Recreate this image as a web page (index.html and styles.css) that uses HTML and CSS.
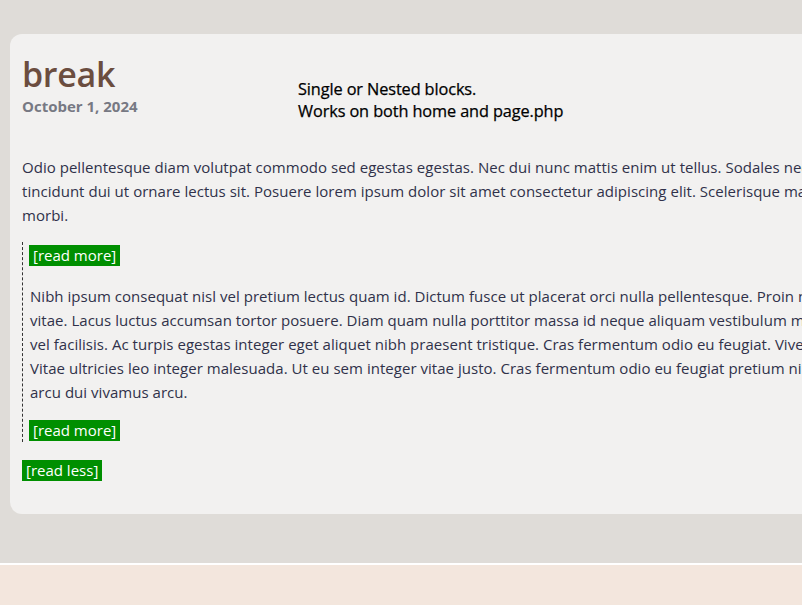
FILE: index.html
```html
<!DOCTYPE html>
<html lang="en">
<head>
<meta charset="utf-8">
<title>break</title>
<link rel="stylesheet" href="styles.css">
</head>
<body>
<main class="page">
  <article class="card">
    <header class="card-head">
      <div class="title-block">
        <h1 class="title">break</h1>
        <div class="date">October 1, 2024</div>
      </div>
      <div class="note">Single or Nested blocks.<br>Works on both home and page.php</div>
    </header>
    <p class="text">Odio pellentesque diam volutpat commodo sed egestas egestas. Nec dui nunc mattis enim ut tellus. Sodales neque sodales ut etiam sit amet nisl purus in mollis.<br>tincidunt dui ut ornare lectus sit. Posuere lorem ipsum dolor sit amet consectetur adipiscing elit. Scelerisque mauris pellentesque pulvinar pellentesque habitant<br>morbi.</p>
    <div class="nested">
      <span class="btn">[read more]</span>
      <p class="text">Nibh ipsum consequat nisl vel pretium lectus quam id. Dictum fusce ut placerat orci nulla pellentesque. Proin nibh nisl condimentum id venenatis a condimentum<br>vitae. Lacus luctus accumsan tortor posuere. Diam quam nulla porttitor massa id neque aliquam vestibulum morbi blandit cursus risus at ultrices mi tempus imperdiet nulla malesuada<br>vel facilisis. Ac turpis egestas integer eget aliquet nibh praesent tristique. Cras fermentum odio eu feugiat. Viverra accumsan in nisl nisi scelerisque eu ultrices vitae auctor eu<br>Vitae ultricies leo integer malesuada. Ut eu sem integer vitae justo. Cras fermentum odio eu feugiat pretium nibh ipsum consequat nisl vel pretium lectus quam id leo in<br>arcu dui vivamus arcu.</p>
      <span class="btn">[read more]</span>
    </div>
    <span class="btn">[read less]</span>
  </article>
</main>
<footer class="foot"></footer>
</body>
</html>
```
FILE: styles.css
```css
html, body {
  margin: 0;
  padding: 0;
  overflow: hidden;
}
body {
  background: #dfdcd8;
  font-family: "Open Sans", "Noto Sans", sans-serif;
  color: #30314a;
  height: 605px;
  width: 802px;
}
.page {
  padding: 34px 0 0 10px;
  height: 563px;
  box-sizing: border-box;
}
.card {
  background: #f2f1f0;
  border-radius: 12px;
  width: 1200px;
  padding: 20px 12px 33px 12px;
  box-sizing: border-box;
}
.card-head {
  display: flex;
  align-items: flex-start;
  height: 101px;
}
.title-block {
  width: 276px;
}
.title {
  margin: 0;
  font-size: 34px;
  line-height: 40px;
  font-weight: 600;
  color: #6b4d3f;
  letter-spacing: -0.3px;
}
.date {
  font-size: 15px;
  font-weight: 700;
  color: #777983;
  line-height: 20px;
  margin-top: 2px;
}
.note {
  margin-top: 24px;
  font-size: 16.3px;
  line-height: 22px;
  color: #000;
  font-weight: 500;
  letter-spacing: -0.1px;
  -webkit-text-stroke: 0.25px #000;
}
.text {
  margin: 0;
  font-size: 15px;
  letter-spacing: 0.03px;
  line-height: 24px;
  white-space: nowrap;
}
.nested {
  margin: 15px 0 17px 0;
  border-left: 1px dashed #333;
  padding: 3px 0 1px 6px;
  display: flex;
  flex-direction: column;
  align-items: flex-start;
}
.nested .text {
  margin: 18px 0 16px 1px;
}
.btn {
  display: inline-block;
  background: #008f00;
  color: #fff;
  font-size: 15px;
  line-height: 21px;
  padding: 0 4px;
}
.foot {
  border-top: 2px solid #fff;
  background: #f3e6dd;
  height: 40px;
}
```
